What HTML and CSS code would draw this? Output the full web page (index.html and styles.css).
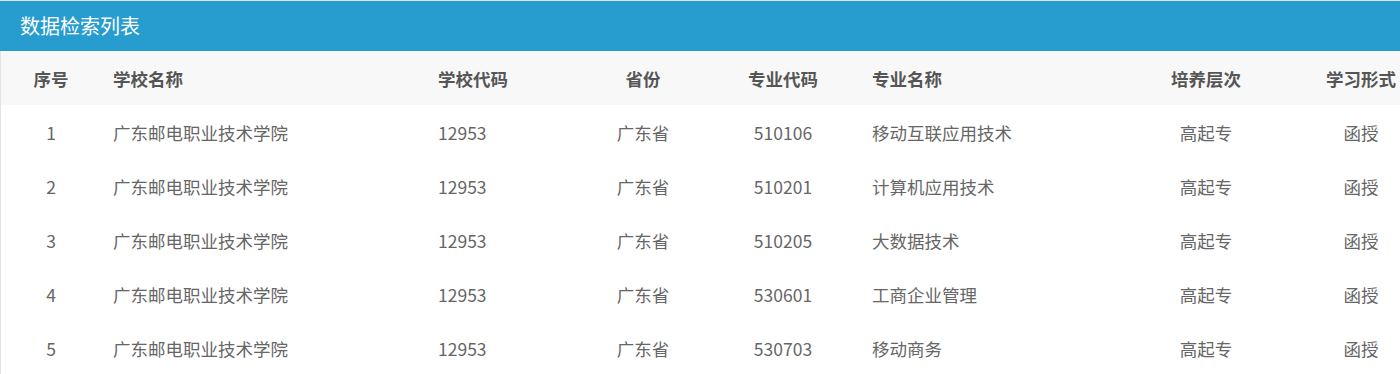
FILE: index.html
```html
<!DOCTYPE html>
<html lang="zh-CN">
<head>
<meta charset="utf-8">
<title>数据检索列表</title>
<link rel="stylesheet" href="styles.css">
</head>
<body>
<div class="panel">
  <div class="panel-title">数据检索列表</div>
  <div class="panel-body">
    <table class="grid">
      <colgroup>
        <col class="c-no"><col class="c-school"><col class="c-code"><col class="c-prov">
        <col class="c-mcode"><col class="c-major"><col class="c-level"><col class="c-form">
      </colgroup>
      <thead>
        <tr>
          <th class="center">序号</th>
          <th>学校名称</th>
          <th>学校代码</th>
          <th class="center">省份</th>
          <th class="center">专业代码</th>
          <th>专业名称</th>
          <th class="center">培养层次</th>
          <th class="center">学习形式</th>
        </tr>
      </thead>
      <tbody>
        <tr><td class="center">1</td><td>广东邮电职业技术学院</td><td>12953</td><td class="center">广东省</td><td class="center">510106</td><td>移动互联应用技术</td><td class="center">高起专</td><td class="center">函授</td></tr>
        <tr><td class="center">2</td><td>广东邮电职业技术学院</td><td>12953</td><td class="center">广东省</td><td class="center">510201</td><td>计算机应用技术</td><td class="center">高起专</td><td class="center">函授</td></tr>
        <tr><td class="center">3</td><td>广东邮电职业技术学院</td><td>12953</td><td class="center">广东省</td><td class="center">510205</td><td>大数据技术</td><td class="center">高起专</td><td class="center">函授</td></tr>
        <tr><td class="center">4</td><td>广东邮电职业技术学院</td><td>12953</td><td class="center">广东省</td><td class="center">530601</td><td>工商企业管理</td><td class="center">高起专</td><td class="center">函授</td></tr>
        <tr><td class="center">5</td><td>广东邮电职业技术学院</td><td>12953</td><td class="center">广东省</td><td class="center">530703</td><td>移动商务</td><td class="center">高起专</td><td class="center">函授</td></tr>
      </tbody>
    </table>
  </div>
</div>
</body>
</html>
```

FILE: styles.css
```css
html, body {
  margin: 0;
  padding: 0;
  overflow: hidden;
  background: #fff;
}
body {
  font-family: "Noto Sans CJK SC", "Noto Sans", sans-serif;
  color: #666;
}
.panel {
  width: 1400px;
  overflow: hidden;
  border-top: 1px solid #d9e6ee;
}
.panel-title {
  background: #279ccf;
  color: #fff;
  font-size: 20px;
  height: 50px;
  line-height: 50px;
  padding-left: 20px;
}
.panel-body {
  border-left: 1px solid #e4e4e4;
}
.grid {
  border-collapse: collapse;
  table-layout: fixed;
  width: 1415px;
}
.c-no { width: 100px; }
.c-school { width: 325px; }
.c-code { width: 154px; }
.c-prov { width: 126px; }
.c-mcode { width: 154px; }
.c-major { width: 246px; }
.c-level { width: 200px; }
.c-form { width: 110px; }
.grid th, .grid td {
  height: 54px;
  padding: 0 12px;
  text-align: left;
  font-size: 17.5px;
  white-space: nowrap;
}
.grid th {
  background: #f8f8f8;
  color: #555;
  font-weight: bold;
}
.grid td {
  color: #666;
}
.grid .center {
  text-align: center;
}
```
